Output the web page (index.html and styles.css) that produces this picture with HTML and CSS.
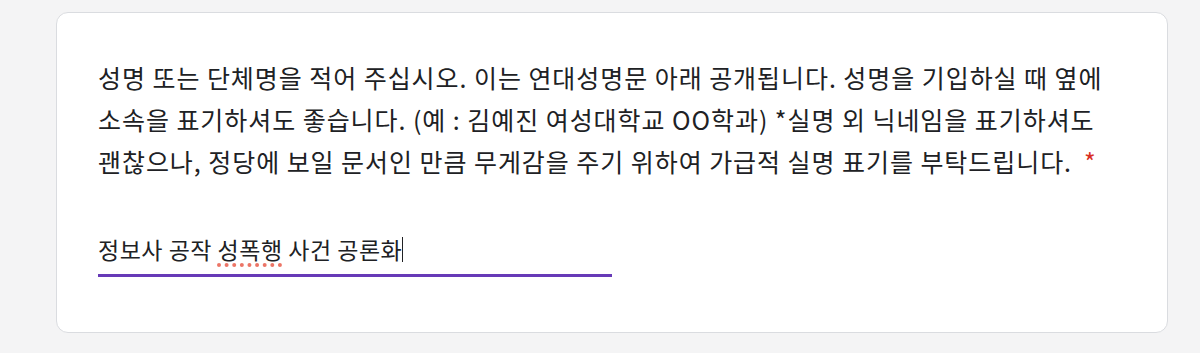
FILE: index.html
```html
<!DOCTYPE html>
<html>
<head>
  <title>성명 기입</title>
  <link rel="stylesheet" href="styles.css">
</head>
<body>
  <div class="card">
    <div class="question">
      성명 또는 단체명을 적어 주십시오. 이는 연대성명문 아래 공개됩니다. 성명을 기입하실 때 옆에 소속을 표기하셔도 좋습니다. (예 : 김예진 여성대학교 OO학과) *실명 외 닉네임을 표기하셔도 괜찮으나, 정당에 보일 문서인 만큼 무게감을 주기 위하여 가급적 실명 표기를 부탁드립니다.<span class="required">*</span>
    </div>

    <div class="answer">
      <span class="answer-text">정보사 공작 <span class="typo">성폭행</span> 사건 공론화</span><span class="caret"></span>
    </div>
  </div>
</body>
</html>
```

FILE: styles.css
```css
body {
  margin: 0;
  padding: 12px 32px 20px 56px;
  background-color: #f4f4f5;
  font-family: "Noto Sans CJK KR", "Noto Sans", sans-serif;
  color: #202124;
}

.card {
  box-sizing: border-box;
  width: 1112px;
  height: 321px;
  background-color: #fff;
  border: 1px solid #dadce0;
  border-radius: 12px;
  padding: 43px 41px 0 41px;
}

.question {
  font-size: 25px;
  line-height: 42px;
  letter-spacing: 0.95px;
  width: 1025px;
  word-break: keep-all;
}

.required {
  color: #d93025;
  margin-left: 12px;
}

.answer {
  margin-top: 52px;
  width: 514px;
  border-bottom: 3px solid #673ab7;
  padding-bottom: 10px;
  font-size: 23px;
  line-height: 30px;
  letter-spacing: 0.5px;
  display: flex;
  align-items: center;
}

.typo {
  text-decoration: underline dotted #ec7566;
  text-decoration-thickness: 4px;
  text-underline-offset: 4px;
}

.caret {
  display: inline-block;
  width: 1px;
  height: 25px;
  background-color: #202124;
}
```
